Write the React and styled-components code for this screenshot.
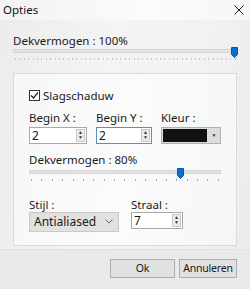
import styled, { createGlobalStyle } from "styled-components";

const GlobalStyle = createGlobalStyle`
  html, body {
    margin: 0;
    padding: 0;
    background: #f0f0f0;
  }
  * { box-sizing: border-box; }
`;

const Window = styled.div`
  width: 250px;
  height: 289px;
  display: flex;
  flex-direction: column;
  font-family: "Noto Sans", "Open Sans", sans-serif;
  font-size: 11.5px;
  color: #1a1a1a;
  background: linear-gradient(100deg, #ececec 0%, #f4f4f4 40%, #f1f2f2 70%, #eaebeb 100%);
  overflow: hidden;
`;

const TitleBar = styled.div`
  height: 20px;
  display: flex;
  align-items: center;
  justify-content: space-between;
  padding: 0 6px 0 3px;
  background: linear-gradient(90deg, #f3f3f3, #fbfbfb 60%, #f6f6f6);
  font-size: 11.5px;
  color: #111;
`;

const Close = styled.svg`
  width: 10px;
  height: 10px;
`;

const Body = styled.div`
  display: flex;
  flex-direction: column;
  padding: 14px 13px 0 13px;
`;

const Label = styled.div`
  line-height: 14px;
  height: 14px;
  white-space: nowrap;
`;

const SliderWrap = styled.div`
  position: relative;
  width: ${(p) => p.$width}px;
  height: 14px;
  margin-top: ${(p) => p.$top || 0}px;
`;

const Track = styled.div`
  position: absolute;
  left: 0;
  right: 0;
  top: 2px;
  height: 4px;
  background: #e2e2e2;
  border: 1px solid #d6d6d6;
`;

const Thumb = styled.svg`
  position: absolute;
  top: 0;
  width: 7px;
  height: 11px;
`;

const Ticks = styled.div`
  position: absolute;
  left: 2px;
  right: 2px;
  top: 11px;
  height: 2px;
  display: flex;
  justify-content: space-between;
`;

const Tick = styled.span`
  width: 1px;
  height: 2px;
  background: ${(p) => p.$color || "#a8a8a8"};
`;

const Panel = styled.div`
  margin-top: 12px;
  width: 224px;
  height: 173px;
  border: 1px solid #dadada;
  background: linear-gradient(100deg, #f7f7f7 0%, #fbfbfb 50%, #f5f6f6 100%);
  padding: 15px 0 0 15px;
  display: flex;
  flex-direction: column;
`;

const CheckRow = styled.label`
  display: flex;
  align-items: center;
  gap: 3px;
  height: 14px;
`;

const Box = styled.span`
  width: 11px;
  height: 11px;
  border: 1px solid #333;
  background: #fff;
  display: flex;
  align-items: center;
  justify-content: center;
`;

const Row = styled.div`
  display: flex;
  gap: ${(p) => p.$gap || 9}px;
  margin-top: ${(p) => p.$top || 0}px;
`;

const Field = styled.div`
  display: flex;
  flex-direction: column;
  gap: ${(p) => p.$gap}px;
  margin-top: ${(p) => p.$top || 0}px;
`;

const Spin = styled.div`
  width: ${(p) => p.$width}px;
  height: 17px;
  border: 1px solid ${(p) => (p.$focus ? "#5b8fc7" : "#a9a9a9")};
  background: #fff;
  display: flex;
  align-items: center;
  justify-content: space-between;
  padding: 0 1px 0 2px;
  font-size: 12px;
`;

const Arrows = styled.div`
  width: 9px;
  height: 13px;
  display: flex;
  flex-direction: column;
  border: 1px solid #c8c8c8;
  background: #ececec;
`;

const Arrow = styled.span`
  flex: 1;
  display: flex;
  align-items: center;
  justify-content: center;
  font-size: 5px;
  line-height: 1;
  color: #333;
`;

const Color = styled.div`
  width: 60px;
  height: 17px;
  display: flex;
  border: 1px solid #b0b0b0;
  background: #dcdcdc;
`;

const Swatch = styled.div`
  width: 44px;
  margin: 1px;
  background: #111;
`;

const DropBtn = styled.div`
  flex: 1;
  display: flex;
  align-items: center;
  justify-content: center;
  font-size: 5px;
  color: #333;
`;

const Select = styled.div`
  width: 90px;
  height: 20px;
  background: #e1e1e1;
  border: 1px solid #c9c9c9;
  display: flex;
  align-items: center;
  justify-content: space-between;
  padding: 0 5px 0 4px;
  font-size: 12px;
`;

const Footer = styled.div`
  height: 41px;
  margin-top: 3px;
  background: #eaeaea;
  border-top: 1px solid #e2e2e2;
  display: flex;
  justify-content: flex-end;
  align-items: flex-start;
  gap: 4px;
  padding: 9px 13px 0 0;
`;

const Button = styled.button`
  width: ${(p) => p.$width}px;
  height: 19px;
  border: 1px solid #adadad;
  background: #e1e1e1;
  font-family: inherit;
  font-size: 10.5px;
  letter-spacing: -0.2px;
  color: #1a1a1a;
  padding: 0;
`;

const Slider = ({ width, value, ticks, top, tickColor }) => (
  <SliderWrap $width={width} $top={top}>
    <Track />
    <Thumb viewBox="0 0 7 11" style={{ left: `${(value / 100) * (width - 7)}px` }}>
      <path d="M0.5 0.5 H6.5 V7.5 L3.5 10.5 L0.5 7.5 Z" fill="#0a6fcf" stroke="#0058b0" />
    </Thumb>
    <Ticks>
      {Array.from({ length: ticks }).map((_, i) => (
        <Tick key={i} $color={tickColor} />
      ))}
    </Ticks>
  </SliderWrap>
);

const SpinBox = ({ value, width, focus }) => (
  <Spin $width={width} $focus={focus}>
    <span>{value}</span>
    <Arrows>
      <Arrow>▲</Arrow>
      <Arrow>▼</Arrow>
    </Arrows>
  </Spin>
);

const App = () => {
  return (
    <>
      <GlobalStyle />
      <Window>
        <TitleBar>
          <span>Opties</span>
          <Close viewBox="0 0 10 10">
            <path d="M0.5 0.5 L9.5 9.5 M9.5 0.5 L0.5 9.5" stroke="#222" strokeWidth="1" />
          </Close>
        </TitleBar>
        <Body>
          <Label>Dekvermogen : 100%</Label>
          <Slider width={225} value={100} ticks={51} top={-1} tickColor="#c4c4c4" />
          <Panel>
            <CheckRow>
              <Box>
                <svg width="9" height="9" viewBox="0 0 9 9">
                  <path d="M1 4.5 L3.5 7 L8 1.5" fill="none" stroke="#222" strokeWidth="1.2" />
                </svg>
              </Box>
              Slagschaduw
            </CheckRow>
            <Row $top={8}>
              <Field $gap={2}>
                <Label>Begin X :</Label>
                <SpinBox value="2" width={58} />
              </Field>
              <Field $gap={2}>
                <Label>Begin Y :</Label>
                <SpinBox value="2" width={56} focus />
              </Field>
              <Field $gap={2}>
                <Label>Kleur :</Label>
                <Color>
                  <Swatch />
                  <DropBtn>▼</DropBtn>
                </Color>
              </Field>
            </Row>
            <Field $gap={1} $top={9}>
              <Label>Dekvermogen : 80%</Label>
              <Slider width={192} value={80} ticks={19} />
            </Field>
            <Row $top={16} $gap={12}>
              <Field $gap={-1}>
                <Label>Stijl :</Label>
                <Select>
                  <span>Antialiased</span>
                  <svg width="8" height="5" viewBox="0 0 8 5">
                    <path d="M0.5 0.5 L4 4 L7.5 0.5" fill="none" stroke="#666" />
                  </svg>
                </Select>
              </Field>
              <Field $gap={0}>
                <Label>Straal :</Label>
                <SpinBox value="7" width={52} />
              </Field>
            </Row>
          </Panel>
        </Body>
        <Footer>
          <Button $width={65}>Ok</Button>
          <Button $width={58}>Annuleren</Button>
        </Footer>
      </Window>
    </>
  );
};

export default App;
